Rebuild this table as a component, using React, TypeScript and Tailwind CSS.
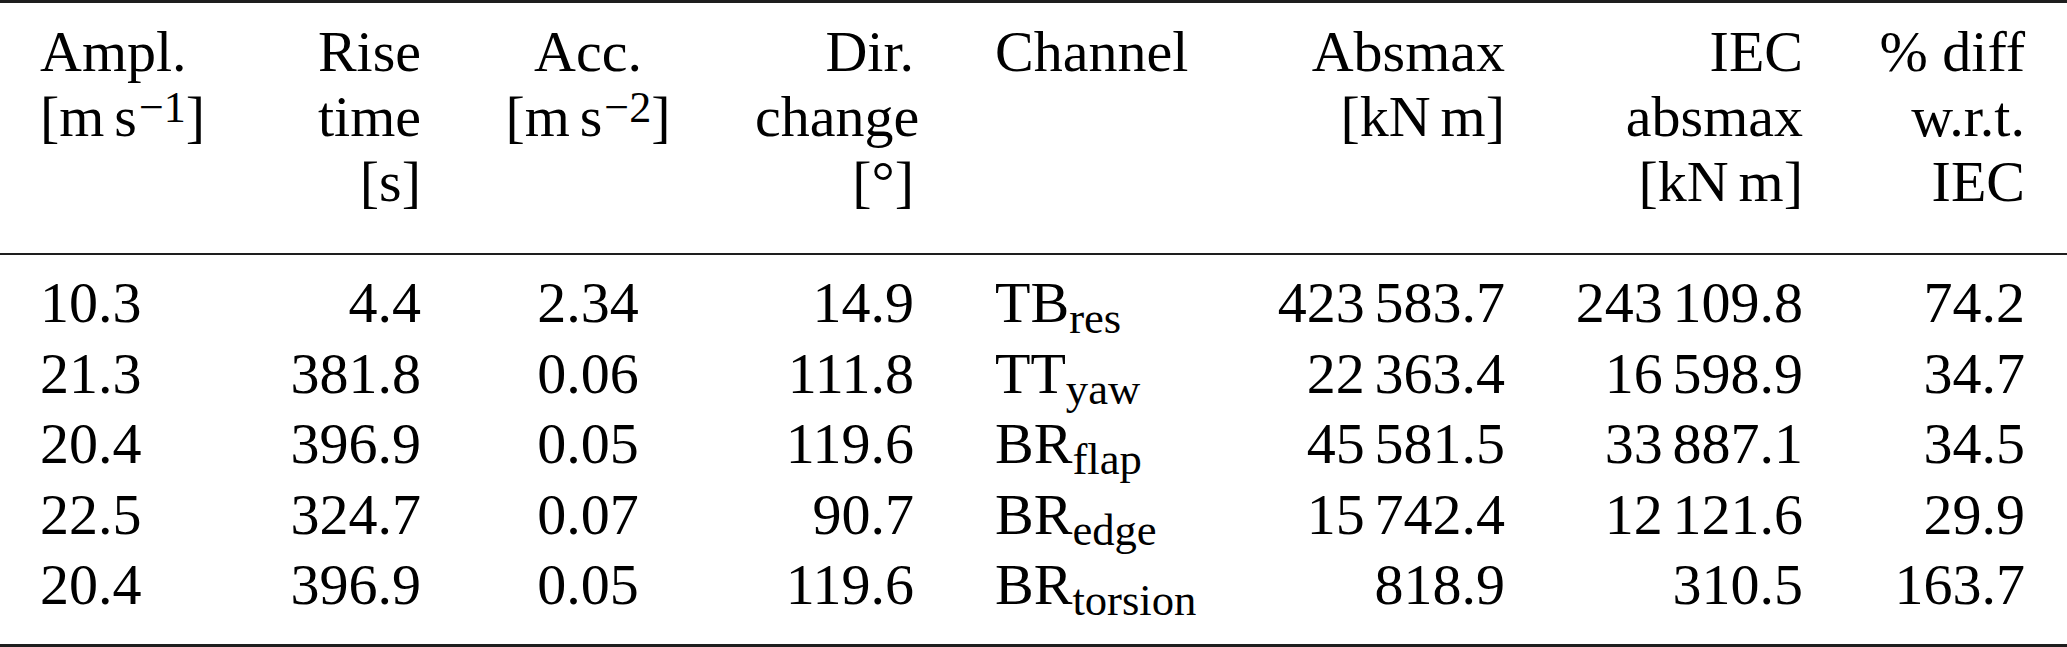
import React from 'react';

const cols = 'grid grid-cols-[200px_181px_334px_159px_326px_265px_298px_222px]';
const align = [
  'text-left',
  'text-right',
  'text-center',
  'text-right',
  'text-left pl-[81px]',
  'text-right',
  'text-right',
  'text-right',
];

// thin space like siunitx group separator
const Th = () => <span className="inline-block w-[0.17em]" />;

const num = (s: string) => {
  const parts = s.split(' ');
  return parts.map((p, i) => (
    <React.Fragment key={i}>
      {i > 0 && <Th />}
      {p}
    </React.Fragment>
  ));
};

const Ch = ({ base, sub }: { base: string; sub: string }) => (
  <span>
    {base}
    <sub className="text-[0.77em]">{sub}</sub>
  </span>
);

const Unit = ({ exp }: { exp: string }) => (
  <>
    [m<Th />s<sup className="text-[0.76em] ml-[2px] -top-[0.32em]">{exp}</sup>]
  </>
);

const header: React.ReactNode[] = [
  <>Ampl.<br /><Unit exp="−1" /></>,
  <>Rise<br />time<br />[s]</>,
  <>Acc.<br /><Unit exp="−2" /></>,
  <>Dir.<br />change<br />[°]</>,
  <>Channel</>,
  <>Absmax<br />[kN<Th />m]</>,
  <>IEC<br />absmax<br />[kN<Th />m]</>,
  <>% diff<br />w.r.t.<br />IEC</>,
];

const rows: [string, string, string, string, string, string, string, string, string][] = [
  ['10.3', '4.4', '2.34', '14.9', 'TB', 'res', '423 583.7', '243 109.8', '74.2'],
  ['21.3', '381.8', '0.06', '111.8', 'TT', 'yaw', '22 363.4', '16 598.9', '34.7'],
  ['20.4', '396.9', '0.05', '119.6', 'BR', 'flap', '45 581.5', '33 887.1', '34.5'],
  ['22.5', '324.7', '0.07', '90.7', 'BR', 'edge', '15 742.4', '12 121.6', '29.9'],
  ['20.4', '396.9', '0.05', '119.6', 'BR', 'torsion', '818.9', '310.5', '163.7'],
];

export default function App() {
  return (
    <div className="w-[2067px] h-[647px] bg-white text-black font-[family-name:'Liberation_Serif',serif] text-[58px] flex flex-col">
      <div className="h-[3px] bg-[#1e1e1e]" />

      {/* header */}
      <div className={`${cols} pl-[40px] pt-[16px] pb-[39px] leading-[65px]`}>
        {header.map((h, i) => (
          <div key={i} className={align[i]}>
            {h}
          </div>
        ))}
      </div>

      <div className="h-[2px] bg-[#1e1e1e]" />

      {/* body */}
      <div className="pl-[40px] pt-[13px] pb-[23.5px] leading-[70.5px]">
        {rows.map((r, ri) => {
          const cells: React.ReactNode[] = [
            r[0],
            r[1],
            r[2],
            r[3],
            <Ch base={r[4]} sub={r[5]} />,
            num(r[6]),
            num(r[7]),
            r[8],
          ];
          return (
            <div key={ri} className={cols}>
              {cells.map((c, ci) => (
                <div key={ci} className={`${align[ci]} whitespace-nowrap`}>
                  {c}
                </div>
              ))}
            </div>
          );
        })}
      </div>

      <div className="h-[3px] bg-[#1e1e1e]" />
    </div>
  );
}
